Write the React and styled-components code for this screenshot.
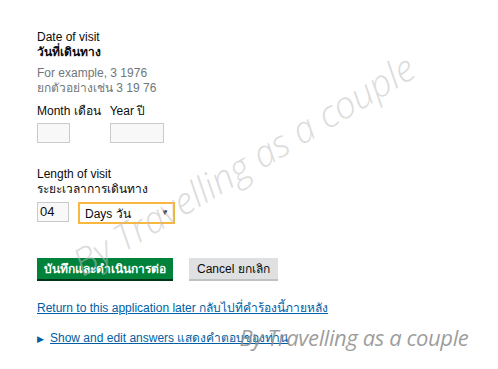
import React from "react";
import styled, { createGlobalStyle } from "styled-components";

const Global = createGlobalStyle`
  html, body { margin: 0; padding: 0; background: #fff; }
  body { font-family: "Liberation Sans", "Noto Sans", Arial, sans-serif; color: #0b0c0c; }
`;

const Page = styled.div`
  position: relative;
  width: 498px;
  height: 369px;
  overflow: hidden;
  padding: 30px 0 0 37px;
  box-sizing: border-box;
`;

const Fieldset = styled.div`
  display: flex;
  flex-direction: column;
  margin-bottom: ${(p) => p.$mb || 0}px;
`;

const Legend = styled.div`
  font-size: 12px;
  line-height: 15px;
  font-weight: ${(p) => (p.$bold ? 700 : 400)};
`;

const Hint = styled.div`
  font-size: 12px;
  line-height: 15px;
  color: #6f777b;
  margin-top: ${(p) => p.$mt || 0}px;
`;

const DateRow = styled.div`
  display: flex;
  gap: 9px;
  margin-top: 8px;
`;

const DateItem = styled.div`
  display: flex;
  flex-direction: column;
  gap: 4px;
`;

const Label = styled.div`
  font-size: 12px;
  line-height: 15px;
`;

const TextBox = styled.div`
  width: ${(p) => p.$w}px;
  height: 20px;
  box-sizing: border-box;
  border: 1px solid #c8cacb;
  background: #f8f8f8;
  font-size: 13px;
  line-height: 18px;
  padding-left: 2px;
`;

const InlineRow = styled.div`
  display: flex;
  align-items: flex-start;
  gap: 9px;
  margin-top: 5px;
`;

const Select = styled.div`
  width: 97px;
  height: 22px;
  box-sizing: border-box;
  border: 2px solid #f8b73f;
  background: #fff;
  display: flex;
  align-items: center;
  justify-content: space-between;
  padding: 0 4px 0 5px;
  font-size: 12px;
`;

const Caret = styled.span`
  font-size: 8px;
  line-height: 1;
`;

const Buttons = styled.div`
  display: flex;
  gap: 16px;
  margin-top: 34px;
`;

const Button = styled.div`
  height: 21px;
  box-sizing: border-box;
  padding: 0 ${(p) => (p.$primary ? 7 : 8)}px;
  display: flex;
  align-items: center;
  font-size: 12px;
  font-weight: ${(p) => (p.$primary ? 700 : 400)};
  color: ${(p) => (p.$primary ? "#fff" : "#0b0c0c")};
  background: ${(p) => (p.$primary ? "#00823b" : "#dee0e2")};
  box-shadow: 0 2px 0 ${(p) => (p.$primary ? "#003618" : "#bfc1c3")};
`;

const Link = styled.a`
  display: block;
  margin-top: ${(p) => p.$mt || 0}px;
  font-size: 12px;
  line-height: 15px;
  color: #005ea5;
  text-decoration: underline;
`;

const Details = styled.div`
  display: flex;
  align-items: center;
  gap: 6px;
  margin-top: 15px;
`;

const Arrow = styled.span`
  font-size: 9px;
  color: #005ea5;
`;

const Watermark = styled.div`
  position: absolute;
  white-space: nowrap;
  font-family: "Open Sans", "DejaVu Sans", sans-serif;
  font-style: italic;
  font-weight: ${(p) => p.$weight || 400};
  pointer-events: none;
  left: ${(p) => p.$x}px;
  top: ${(p) => p.$y}px;
  font-size: ${(p) => p.$size}px;
  color: ${(p) => p.$color};
  transform: translate(-50%, -50%) rotate(${(p) => p.$rot}deg);
  letter-spacing: ${(p) => p.$ls || 0}px;
`;

export default function App() {
  return (
    <>
      <Global />
      <Page>
        <Fieldset $mb={24}>
          <Legend>Date of visit</Legend>
          <Legend $bold>วันที่เดินทาง</Legend>
          <Hint $mt={6}>For example, 3 1976</Hint>
          <Hint>ยกตัวอย่างเช่น 3 19 76</Hint>
          <DateRow>
            <DateItem>
              <Label>Month เดือน</Label>
              <TextBox $w={33} />
            </DateItem>
            <DateItem>
              <Label>Year ปี</Label>
              <TextBox $w={54} />
            </DateItem>
          </DateRow>
        </Fieldset>
        <Fieldset>
          <Legend>Length of visit</Legend>
          <Legend>ระยะเวลาการเดินทาง</Legend>
          <InlineRow>
            <TextBox $w={32}>04</TextBox>
            <Select>
              <span>Days วัน</span>
              <Caret>▼</Caret>
            </Select>
          </InlineRow>
        </Fieldset>
        <Buttons>
          <Button $primary>บันทึกและดำเนินการต่อ</Button>
          <Button>Cancel ยกเลิก</Button>
        </Buttons>
        <Link $mt={22}>Return to this application later กลับไปที่คำร้องนี้ภายหลัง</Link>
        <Details>
          <Arrow>▶</Arrow>
          <Link>Show and edit answers แสดงคำตอบของท่าน</Link>
        </Details>
        <Watermark $x={243} $y={164} $size={37} $weight={300} $color="rgba(190,190,190,0.55)" $rot={-31}>
          By Travelling as a couple
        </Watermark>
        <Watermark $x={354} $y={337} $size={22} $color="rgba(140,140,140,0.85)" $rot={0} $ls={-0.4}>
          By Travelling as a couple
        </Watermark>
      </Page>
    </>
  );
}
